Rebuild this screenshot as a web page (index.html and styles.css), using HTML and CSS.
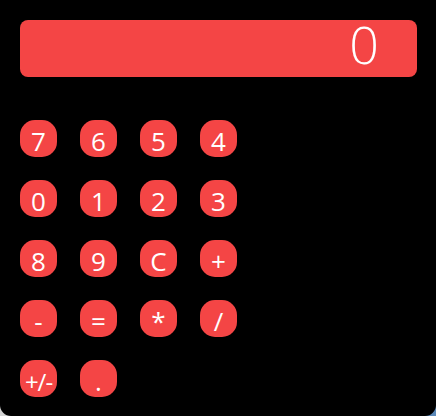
FILE: index.html
```html
<!DOCTYPE html>
<html>
<head>
<meta charset="utf-8">
<link rel="stylesheet" href="styles.css">
</head>
<body>
<div class="window">
  <div class="display"><span class="value">0</span></div>
  <div class="keys">
    <div class="key">7</div><div class="key">6</div><div class="key">5</div><div class="key">4</div>
    <div class="key">0</div><div class="key">1</div><div class="key">2</div><div class="key">3</div>
    <div class="key">8</div><div class="key">9</div><div class="key">C</div><div class="key">+</div>
    <div class="key">-</div><div class="key">=</div><div class="key">*</div><div class="key">/</div>
    <div class="key key-wide">+/-</div><div class="key">.</div>
  </div>
</div>
</body>
</html>
```
FILE: styles.css
```css
html, body {
  margin: 0;
  padding: 0;
}
body {
  width: 436px;
  height: 416px;
  background: linear-gradient(to right, #d4d4d4, #5a88b8);
  font-family: "Open Sans", "Noto Sans", sans-serif;
  overflow: hidden;
}
.window {
  box-sizing: border-box;
  width: 436px;
  height: 416px;
  background: #000;
  border-radius: 0 0 11px 11px;
  padding: 20px 19px 0 20px;
}
.display {
  box-sizing: border-box;
  height: 57px;
  background: #f44545;
  border-radius: 8px;
  color: #fff;
  text-align: right;
  padding-right: 38px;
  font-size: 52px;
  font-weight: 300;
  line-height: 48px;
}
.keys {
  margin-top: 43px;
  display: grid;
  grid-template-columns: repeat(4, 37px);
  grid-auto-rows: 37px;
  gap: 23px;
}
.key {
  box-sizing: border-box;
  width: 37px;
  height: 37px;
  background: #f44545;
  border-radius: 15px;
  color: #fff;
  font-size: 26px;
  line-height: 29px;
  text-align: center;
  padding-top: 7px;
  white-space: nowrap;
  display: flex;
  justify-content: center;
  align-items: flex-start;
}
.key-wide {
  font-size: 24px;
  letter-spacing: -1px;
}
```
